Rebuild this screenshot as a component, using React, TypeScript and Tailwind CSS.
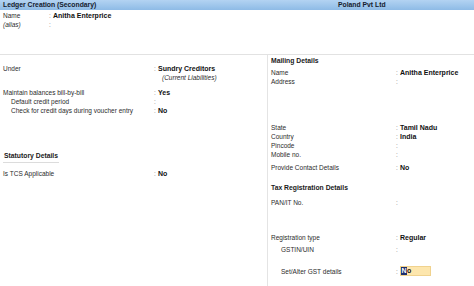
const font = { fontFamily: '"Liberation Sans", Arial, sans-serif' }

function Row({
  label,
  value,
  labelW,
  italic,
  indent,
  h = 'h-[9px]',
  children,
}: {
  label: string
  value?: string
  labelW: string
  italic?: boolean
  indent?: string
  h?: string
  children?: React.ReactNode
}) {
  return (
    <div className={`flex items-center ${h} leading-[9px] whitespace-nowrap`}>
      <div className={`${labelW} shrink-0 text-[6.5px] text-[#2c2c2c] ${italic ? 'italic' : ''}`}>
        <span className={indent}>{label}</span>
      </div>
      <span className="w-[4px] shrink-0 text-[6.5px] text-[#8a8a8a]">:</span>
      {children ?? <span className="text-[7px] font-bold text-[#111]">{value}</span>}
    </div>
  )
}

function SectionTitle({ text, className = '' }: { text: string; className?: string }) {
  return (
    <div className={`h-[9px] leading-[9px] whitespace-nowrap text-[6.8px] font-bold text-[#1a1a1a] ${className}`}>
      {text}
    </div>
  )
}

export default function App() {
  return (
    <div className="w-[474px] h-[286px] bg-white overflow-hidden flex flex-col" style={font}>
      {/* title bar */}
      <div className="h-[10px] shrink-0 flex items-center bg-gradient-to-b from-[#b3d3f2] to-[#8ebbe6] text-[6.8px] font-bold text-[#15202e] leading-[10px] whitespace-nowrap">
        <div className="w-[269px] pl-[3px]">Ledger Creation (Secondary)</div>
        <div className="flex-1 pl-[69px]">Poland Pvt Ltd</div>
      </div>

      {/* name block */}
      <div className="h-[45px] shrink-0 pt-[1px] pl-[3px] border-b border-[#e2e2e2]">
        <Row label="Name" value="Anitha Enterprice" labelW="w-[46px]" />
        <Row label="(alias)" labelW="w-[46px]" italic />
      </div>

      <div className="flex flex-1 min-h-0">
        {/* left column */}
        <div className="w-[268px] shrink-0 pl-[3px] pt-[9px] border-r border-[#e4e4e4]">
          <Row label="Under" value="Sundry Creditors" labelW="w-[151px]" />
          <div className="h-[9px] leading-[9px] pl-[159px] text-[6.5px] italic text-[#2c2c2c]">(Current Liabilities)</div>
          <div className="h-[6px]" />
          <Row label="Maintain balances bill-by-bill" value="Yes" labelW="w-[151px]" />
          <Row label="Default credit period" labelW="w-[151px]" indent="pl-[8px]" />
          <Row label="Check for credit days during voucher entry" value="No" labelW="w-[151px]" indent="pl-[8px]" />
          <div className="h-[36px]" />
          <div className="w-[56px] border-b border-[#dcdcdc] pb-[2px]">
            <SectionTitle text="Statutory Details" className="pl-[1px]" />
          </div>
          <div className="h-[6px]" />
          <Row label="Is TCS Applicable" value="No" labelW="w-[151px]" />
        </div>

        {/* right column */}
        <div className="flex-1 pl-[3px] pt-[1px]">
          <SectionTitle text="Mailing Details" />
          <div className="h-[3px]" />
          <Row label="Name" value="Anitha Enterprice" labelW="w-[125px]" />
          <Row label="Address" labelW="w-[125px]" />
          <div className="h-[37px]" />
          <Row label="State" value="Tamil Nadu" labelW="w-[125px]" />
          <Row label="Country" value="India" labelW="w-[125px]" />
          <Row label="Pincode" labelW="w-[125px]" />
          <Row label="Mobile no." labelW="w-[125px]" />
          <div className="h-[4px]" />
          <Row label="Provide Contact Details" value="No" labelW="w-[125px]" />
          <div className="h-[11px]" />
          <SectionTitle text="Tax Registration Details" />
          <div className="h-[6px]" />
          <Row label="PAN/IT No." labelW="w-[125px]" />
          <div className="h-[26px]" />
          <Row label="Registration type" value="Regular" labelW="w-[125px]" />
          <div className="h-[3px]" />
          <Row label="GSTIN/UIN" labelW="w-[125px]" indent="pl-[10px]" />
          <div className="h-[12px]" />
          <Row label="Set/Alter GST details" labelW="w-[125px]" indent="pl-[10px]" h="h-[10px]">
            <div className="w-[31px] h-[10px] bg-[#fde6ad] border border-[#f0d28e] flex items-center text-[7px] font-bold leading-[8px]">
              <span className="bg-[#1d2f6e] text-white px-[0.5px]">N</span>
              <span className="text-[#111]">o</span>
            </div>
          </Row>
        </div>
      </div>
    </div>
  )
}
